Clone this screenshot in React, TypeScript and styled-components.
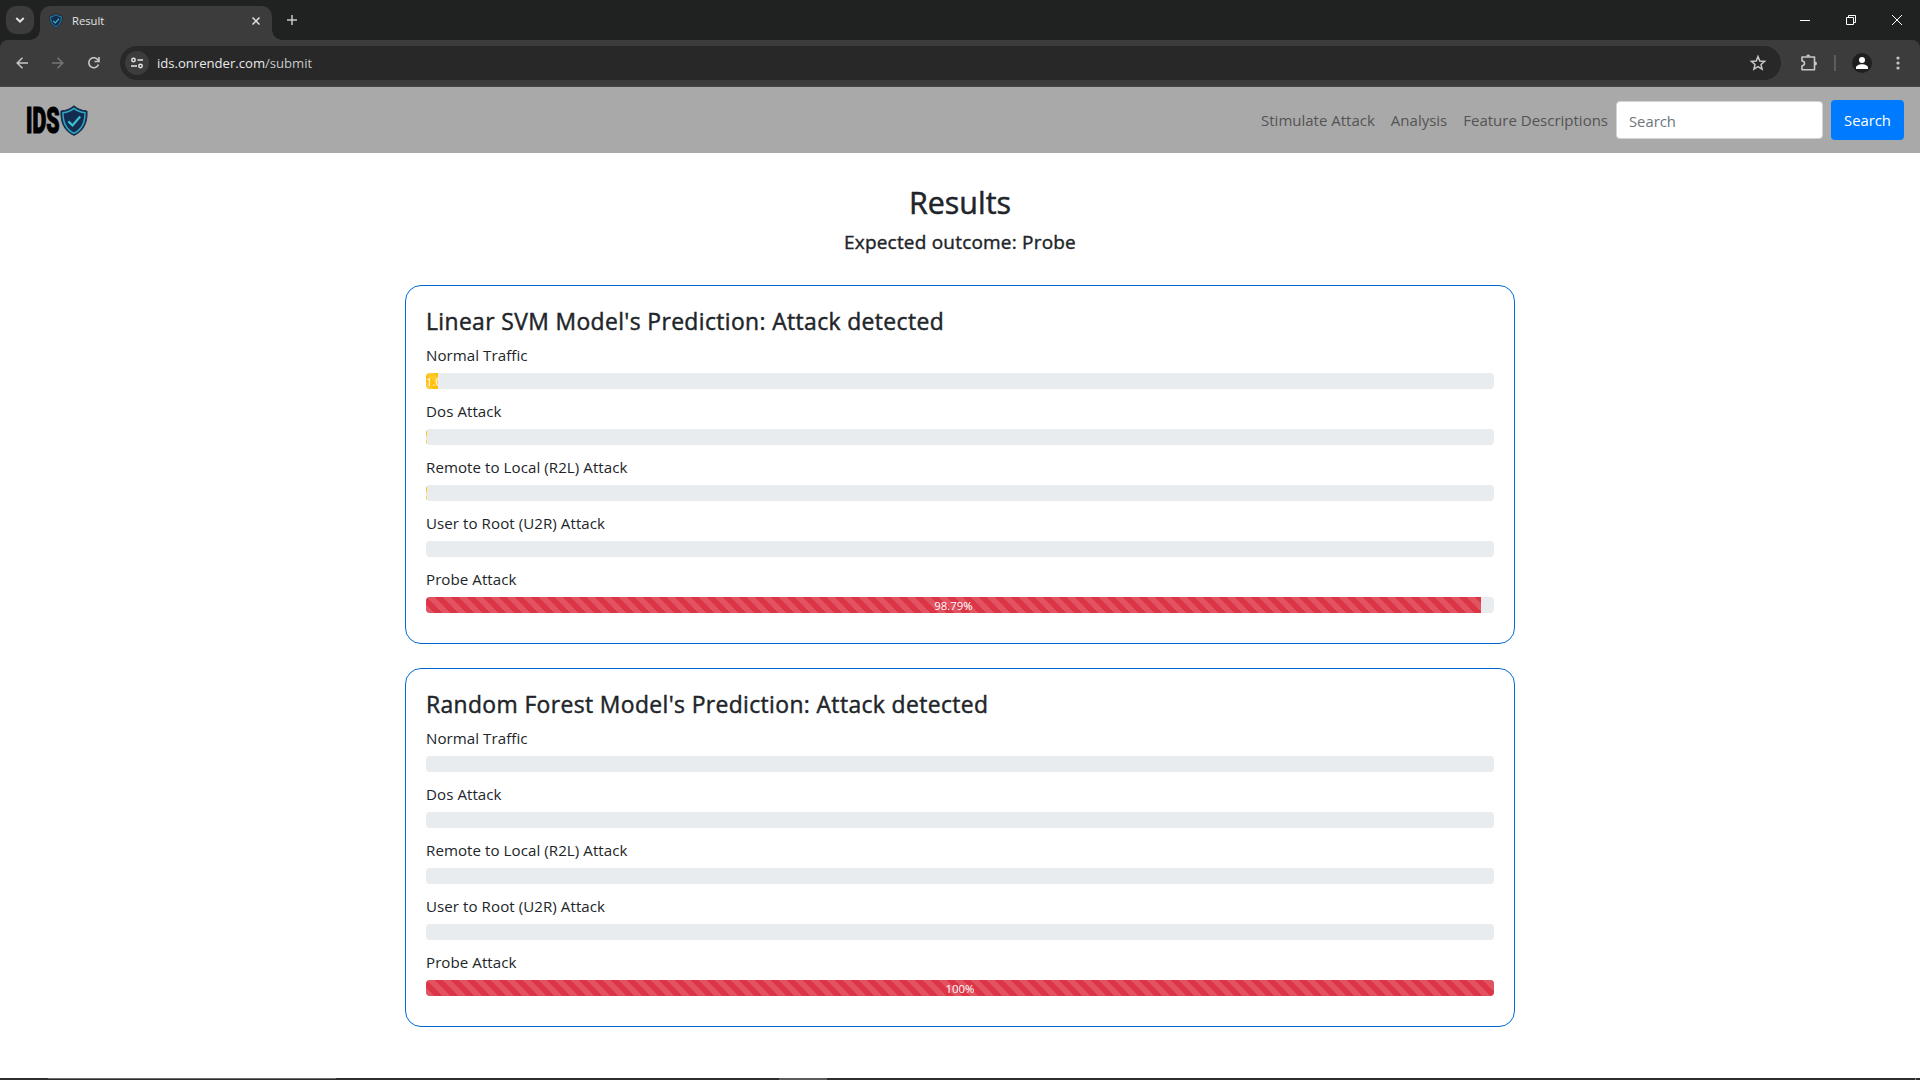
import React from "react";
import styled, { createGlobalStyle } from "styled-components";

const Global = createGlobalStyle`
  *, *::before, *::after { box-sizing: border-box; }
  html, body { margin: 0; padding: 0; background: #fff; }
  body {
    font-family: "Segoe UI", "Open Sans", "Noto Sans", sans-serif;
    font-size: 15.1px;
    line-height: 24px;
    color: #212529;
    overflow: hidden;
  }
`;

const Window = styled.div`
  display: flex;
  flex-direction: column;
  width: 1920px;
  height: 1080px;
  overflow: hidden;
`;

/* ---------- browser chrome ---------- */

const TabStrip = styled.div`
  display: flex;
  height: 40px;
  background: #202221;
  padding-left: 6px;
`;

const TabSearch = styled.div`
  display: grid;
  place-items: center;
  width: 28px;
  height: 28px;
  margin: 6px 6px 0 0;
  border-radius: 10px;
  background: #3c3c3c;
`;

const Tab = styled.div`
  position: relative;
  display: flex;
  align-items: center;
  width: 232px;
  height: 34px;
  margin-top: 6px;
  padding: 0 12px 5px 9px;
  border-radius: 10px 10px 0 0;
  background: #3c3c3c;
  &::before, &::after {
    content: "";
    position: absolute;
    bottom: 0;
    width: 10px;
    height: 10px;
  }
  &::before { left: -10px; background: radial-gradient(circle at 0 0, transparent 9.5px, #3c3c3c 10px); }
  &::after { right: -10px; background: radial-gradient(circle at 100% 0, transparent 9.5px, #3c3c3c 10px); }
`;

const TabTitle = styled.span`
  flex: 1;
  margin-left: 9px;
  font-size: 11.2px;
  line-height: 16px;
  color: #e3e3e3;
`;

const NewTab = styled.div`
  display: grid;
  place-items: center;
  width: 28px;
  height: 28px;
  margin: 6px 0 0 6px;
`;

const WindowButtons = styled.div`
  display: flex;
  margin-left: auto;
`;

const WindowButton = styled.div`
  display: grid;
  place-items: center;
  width: 46px;
  height: 40px;
`;

const ToolbarBack = styled.div`
  background: #202221;
`;

const Toolbar = styled.div`
  display: flex;
  align-items: center;
  height: 47px;
  padding: 0 12px;
  border-radius: 8px 8px 0 0;
  border-bottom: 1px solid #484848;
  background: #3c3c3c;
`;

const ToolButton = styled.div<{ $left?: number; $right?: number }>`
  display: grid;
  place-items: center;
  width: 20px;
  height: 20px;
  margin-left: ${(p) => p.$left ?? 0}px;
  margin-right: ${(p) => p.$right ?? 0}px;
`;

const Omnibox = styled.div`
  display: flex;
  align-items: center;
  width: 1662px;
  height: 34px;
  padding: 0 14px 0 5px;
  border-radius: 17px;
  background: #282828;
`;

const SiteInfo = styled.div`
  display: grid;
  place-items: center;
  width: 24px;
  height: 24px;
  border-radius: 50%;
  background: #3c3c3c;
`;

const Url = styled.span`
  flex: 1;
  margin-left: 8px;
  font-size: 13.1px;
  line-height: 18px;
  color: #e8e8e8;
  span { color: #c7c7c7; }
`;

const Separator = styled.div`
  width: 2px;
  height: 16px;
  margin: 0 16px 0 0;
  background: #5c5c5c;
`;

const Avatar = styled.div`
  display: grid;
  place-items: center;
  width: 20px;
  height: 20px;
  border-radius: 50%;
  background: #1f1f1f;
`;

/* ---------- page ---------- */

const Navbar = styled.nav`
  display: flex;
  align-items: center;
  height: 66px;
  padding: 0 16px 0 26px;
  background: #a9a9a9;
`;

const NavLinks = styled.div`
  display: flex;
  gap: 16px;
  margin: 0 8px 0 auto;
`;

const NavLink = styled.a`
  color: #545454;
  font-size: 15px;
  white-space: nowrap;
`;

const SearchInput = styled.input`
  width: 207px;
  height: 38px;
  margin-right: 8px;
  padding: 7px 12px 5px;
  border: 1px solid #ced4da;
  border-radius: 4px;
  background: #fff;
  font: inherit;
  font-size: 14.8px;
  &::placeholder { color: #6c757d; opacity: 1; }
`;

const SearchButton = styled.button`
  width: 73px;
  height: 40px;
  padding: 0;
  border: 0;
  border-radius: 4px;
  background: #007bff;
  color: #fff;
  font: inherit;
  font-size: 14.8px;
`;

const Page = styled.main`
  display: flex;
  flex-direction: column;
  flex: 1;
  width: 1110px;
  margin: 0 auto;
  padding-top: 29.8px;
`;

const Heading = styled.h2`
  height: 46.4px;
  margin: 0;
  padding-top: 1.6px;
  font-size: 30.4px;
  font-weight: 500;
  line-height: 38.4px;
  text-align: center;
  -webkit-text-stroke: 0.5px currentColor;
`;

const SubHeading = styled.h5`
  height: 24px;
  margin: 0 0 32px;
  padding-top: 1px;
  font-size: 19px;
  font-weight: 500;
  line-height: 24px;
  letter-spacing: 0.2px;
  text-align: center;
  -webkit-text-stroke: 0.4px currentColor;
`;

const Card = styled.section`
  height: 358.8px;
  margin-bottom: 24px;
  padding: 20px;
  border: 1px solid #0069d0;
  border-radius: 16px;
`;

const CardTitle = styled.h4`
  height: 36.8px;
  margin: 0;
  padding-top: 2px;
  font-size: 22.9px;
  font-weight: 500;
  line-height: 28.8px;
  letter-spacing: 0.37px;
  -webkit-text-stroke: 0.45px currentColor;
`;

const Metric = styled.div`
  height: 56px;
`;

const MetricLabel = styled.div`
  height: 30.2px;
  letter-spacing: 0.06px;
`;

const Track = styled.div`
  display: flex;
  height: 16px;
  border-radius: 4px;
  background: #e9ecef;
  overflow: hidden;
`;

const Fill = styled.div<{ $color: string }>`
  height: 16px;
  padding-top: 1px;
  overflow: hidden;
  background-color: ${(p) => p.$color};
  background-image: linear-gradient(45deg, rgba(255,255,255,.15) 25%, transparent 25%, transparent 50%, rgba(255,255,255,.15) 50%, rgba(255,255,255,.15) 75%, transparent 75%, transparent);
  background-size: 16px 16px;
  color: #fff;
  font-size: 11.4px;
  line-height: 16px;
  text-align: center;
  white-space: nowrap;
`;

const Taskbar = styled.div`
  display: flex;
  height: 2px;
  background: #2d2d2f;
`;

const TaskbarItem = styled.div<{ $left: number; $width: number; $height: number; $color: string }>`
  width: ${(p) => p.$width}px;
  height: ${(p) => p.$height}px;
  margin-left: ${(p) => p.$left}px;
  background: ${(p) => p.$color};
`;

const Shield = ({ width, height }: { width: number; height: number }) => (
  <svg width={width} height={height} viewBox="0 0 28 31" fill="none">
    <path d="M14 .8C10.500 4 6 5.700 1 6c-.6 11 3 20 13 24.400C24 26 27.600 17 27 6 22 5.700 17.500 4 14 .8Z" fill="#142c50" stroke="#1b2a4a" strokeWidth="1" />
    <path d="M14 3.400C10.800 6 7.200 7.300 3 7.700c-.2 9.300 2.700 16.600 11 20.600 8.300-4 11.200-11.300 11-20.600C20.800 7.300 17.200 6 14 3.400Z" stroke="#2fa9bf" strokeWidth="1.500" />
    <path d="m8.300 16.400 4.200 4 7.700-9" stroke="#38bfd0" strokeWidth="2.300" />
  </svg>
);

const LogoWord = styled.span`
  display: inline-block;
  width: 34px;
  padding-top: 2px;
  font-family: Roboto, "Liberation Sans", sans-serif;
  font-size: 36px;
  font-weight: 900;
  line-height: 34px;
  color: #000;
  transform: scaleX(0.59);
  transform-origin: 0 50%;
  -webkit-text-stroke: 1.2px #000;
`;

const Brand = styled.div`
  display: flex;
  align-items: center;
  height: 34px;
`;

const metrics = ["Normal Traffic", "Dos Attack", "Remote to Local (R2L) Attack", "User to Root (U2R) Attack", "Probe Attack"];

const models = [
  { name: "Linear SVM", values: [1.09, 0.06, 0.06, 0, 98.79] },
  { name: "Random Forest", values: [0, 0, 0, 0, 100] },
];

export default function App() {
  return (
    <Window>
      <Global />
      <TabStrip>
        <TabSearch>
          <svg width="10" height="8" viewBox="0 0 10 8" fill="none" stroke="#e3e3e3" strokeWidth="2"><path d="m1.300 2 3.700 3.700L8.700 2" /></svg>
        </TabSearch>
        <Tab>
          <Shield width={14} height={15} />
          <TabTitle>Result</TabTitle>
          <svg width="8" height="8" viewBox="0 0 8 8" stroke="#e3e3e3" strokeWidth="1.500"><path d="m.5.5 7 7m0-7-7 7" /></svg>
        </Tab>
        <NewTab>
          <svg width="10" height="10" viewBox="0 0 10 10" stroke="#c7c7c7" strokeWidth="1.500"><path d="M5 0v10M0 5h10" /></svg>
        </NewTab>
        <WindowButtons>
          <WindowButton><svg width="10" height="10"><path d="M0 5.500h10" stroke="#fff" /></svg></WindowButton>
          <WindowButton><svg width="10" height="10" fill="none" stroke="#fff"><path d="M.5 2.500h7v7h-7zM2.500 2V.5h7v7H8" /></svg></WindowButton>
          <WindowButton><svg width="10" height="10" stroke="#fff"><path d="m0 0 10 10M10 0 0 10" /></svg></WindowButton>
        </WindowButtons>
      </TabStrip>
      <ToolbarBack>
        <Toolbar>
          <ToolButton $right={16}>
            <svg width="12" height="12" fill="none" stroke="#c7c7c7" strokeWidth="1.500"><path d="M12 6H1.500M6.500.8 1.200 6l5.300 5.200" /></svg>
          </ToolButton>
          <ToolButton $right={16}>
            <svg width="12" height="12" fill="none" stroke="#757575" strokeWidth="1.500"><path d="M0 6h10.500M5.500.8 10.800 6l-5.300 5.200" /></svg>
          </ToolButton>
          <ToolButton $right={16}>
            <svg width="12" height="12" fill="none" stroke="#c7c7c7" strokeWidth="1.600"><path d="M10.500 7.500A5 5 0 1 1 10.200 3.300M11 0v4.500H6.500" /></svg>
          </ToolButton>
          <Omnibox>
            <SiteInfo>
              <svg width="12" height="12" fill="none" stroke="#e3e3e3" strokeWidth="1.500"><circle cx="2.500" cy="3" r="1.700" /><circle cx="9.500" cy="9" r="1.700" /><path d="M6.500 3H12M0 9h6" /></svg>
            </SiteInfo>
            <Url>ids.onrender.com<span>/submit</span></Url>
            <svg width="20" height="20" viewBox="-1 0 20 20" fill="none" stroke="#c7c7c7" strokeWidth="1.500"><path d="m10 3.600 1.800 4.400 4.800.4-3.600 3.100 1.100 4.700-4.100-2.500-4.100 2.500L7 11.500 3.400 8.400 8.200 8Z" /></svg>
          </Omnibox>
          <ToolButton $left={18} $right={15}>
            <svg width="18" height="18" viewBox="0 0 18 18" fill="none"><path d="M2 3h12.500v12.700H2v-4c3.300 0 3.300-4.700 0-4.700Z" stroke="#c7c7c7" strokeWidth="1.600" strokeLinejoin="round" /><path d="M6.200 2.600a2 2 0 0 1 4 0ZM15 7.400a2 2 0 0 1 0 4Z" fill="#c7c7c7" /></svg>
          </ToolButton>
          <Separator />
          <Avatar>
            <svg width="12" height="12" fill="#fff"><circle cx="6" cy="3" r="3" /><path d="M0 12v-1.500C0 8.500 3 7.200 6 7.200s6 1.300 6 3.300V12Z" /></svg>
          </Avatar>
          <ToolButton $left={16}>
            <svg width="4" height="14" fill="#c7c7c7"><circle cx="2" cy="2" r="1.600" /><circle cx="2" cy="7" r="1.600" /><circle cx="2" cy="12" r="1.600" /></svg>
          </ToolButton>
        </Toolbar>
      </ToolbarBack>
      <Navbar>
        <Brand>
          <LogoWord>IDS</LogoWord>
          <Shield width={28} height={31} />
        </Brand>
        <NavLinks>
          <NavLink>Stimulate Attack</NavLink>
          <NavLink>Analysis</NavLink>
          <NavLink>Feature Descriptions</NavLink>
        </NavLinks>
        <SearchInput placeholder="Search" />
        <SearchButton>Search</SearchButton>
      </Navbar>
      <Page>
        <Heading>Results</Heading>
        <SubHeading>Expected outcome: Probe</SubHeading>
        {models.map((model) => (
          <Card key={model.name}>
            <CardTitle>{model.name} Model's Prediction: Attack detected</CardTitle>
            {metrics.map((label, i) => {
              const value = model.values[i];
              return (
                <Metric key={label}>
                  <MetricLabel>{label}</MetricLabel>
                  <Track>
                    {value > 0 && (
                      <Fill $color={value > 50 ? "#dc3545" : "#ffc107"} style={{ width: `${value}%` }}>
                        {value}%
                      </Fill>
                    )}
                  </Track>
                </Metric>
              );
            })}
          </Card>
        ))}
      </Page>
      <Taskbar>
        <TaskbarItem $left={48} $width={288} $height={1} $color="#6a6a6c" />
        <TaskbarItem $left={443} $width={48} $height={2} $color="#5c5c5e" />
        <TaskbarItem $left={1088} $width={1} $height={2} $color="#8a8a8c" />
      </Taskbar>
    </Window>
  );
}
